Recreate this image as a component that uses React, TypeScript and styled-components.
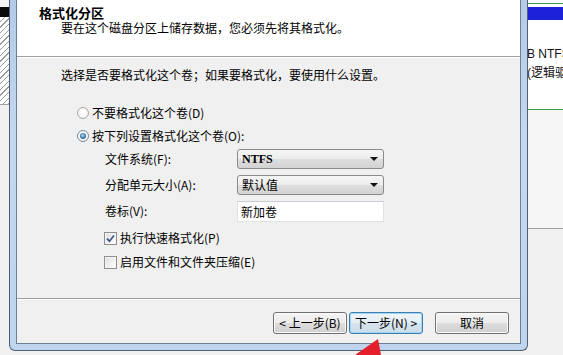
import React from "react";
import styled, { createGlobalStyle, css } from "styled-components";

const GlobalStyle = createGlobalStyle`
  html, body { margin: 0; padding: 0; background: #f0f0f0; }
  body {
    font-family: "Noto Sans CJK SC", "Liberation Sans", sans-serif;
    font-size: 12px;
    color: #000;
  }
  * { box-sizing: border-box; }
`;

const Screen = styled.div`
  position: relative;
  display: flex;
  align-items: flex-start;
  width: 563px;
  height: 355px;
  overflow: hidden;
  background: #f0f0f0;
`;

/* ---------- background window (disk management) ---------- */
const SidePane = styled.div<{ $grow?: boolean }>`
  flex: ${(p) => (p.$grow ? "1 1 auto" : "none")};
  width: ${(p) => (p.$grow ? "auto" : "9px")};
  min-width: 0;
  height: 100%;
  display: flex;
  flex-direction: column;
  overflow: hidden;
  background: #f0f0f0;
`;

const Strip = styled.div<{ $h: number; $bg: string }>`
  flex: none;
  height: ${(p) => p.$h}px;
  background: ${(p) => p.$bg};
`;

const Hatch = styled.div`
  flex: none;
  height: 87px;
  background: repeating-linear-gradient(
    135deg,
    #ffffff 0px,
    #ffffff 3px,
    #9a9a9a 3px,
    #9a9a9a 4px
  );
`;

const DiskInfo = styled.div`
  flex: none;
  height: 89px;
  background: #fff;
  padding-top: 25px;
  margin-left: -1px;
  font-family: "Liberation Sans", "Noto Sans CJK SC", sans-serif;
  font-size: 12px;
  line-height: 19px;
  white-space: nowrap;
  color: #111;
`;

/* ---------- dialog frame ---------- */
const Frame = styled.div`
  flex: none;
  width: 519px;
  height: 351px;
  border: 1px solid #4f6075;
  border-top: none;
  border-radius: 0 0 6px 6px;
  padding: 0 6px 6px;
  background: linear-gradient(to bottom, #b4cbe6, #c4d8ef 40%, #bfd5ee);
`;

const Client = styled.div`
  height: 100%;
  display: flex;
  flex-direction: column;
  border: 1px solid #6c7f95;
  border-top: none;
  background: #f0f0f0;
`;

const Header = styled.div`
  flex: none;
  height: 57px;
  background: #fff;
  border-bottom: 1px solid #a0a0a0;
  padding: 5px 0 0 22px;
`;

const Title = styled.div`
  font-weight: bold;
  font-size: 13px;
  line-height: 16px;
`;

const Subtitle = styled.div`
  padding-left: 22px;
  line-height: 14px;
`;

const Body = styled.div`
  flex: 1;
  padding: 10px 0 0 44px;
  box-shadow: inset 0 1px 0 #ffffff;
`;

const Intro = styled.div`
  line-height: 16px;
`;

const OptionList = styled.div<{ $top: number; $left: number; $gap: number }>`
  display: flex;
  flex-direction: column;
  gap: ${(p) => p.$gap}px;
  margin-top: ${(p) => p.$top}px;
  margin-left: ${(p) => p.$left}px;
`;

const OptionRow = styled.label`
  display: flex;
  align-items: center;
  gap: 3px;
  height: 18px;
  line-height: 18px;
  white-space: nowrap;
`;

const Radio = styled.span<{ $checked?: boolean }>`
  flex: none;
  width: 12px;
  height: 12px;
  border-radius: 50%;
  border: 1px solid #a9a9a9;
  background: radial-gradient(circle at 50% 45%, #ffffff 30%, #e2e2e2 100%);
  display: flex;
  align-items: center;
  justify-content: center;
  ${(p) =>
    p.$checked &&
    css`
      border-color: #7b8a9a;
      &::after {
        content: "";
        width: 6px;
        height: 6px;
        border-radius: 50%;
        background: radial-gradient(
          circle at 45% 40%,
          #a9dcf6 0%,
          #3f77a8 55%,
          #1f3f60 100%
        );
      }
    `}
`;

const CheckBox = styled.span`
  flex: none;
  width: 13px;
  height: 13px;
  border: 1px solid #8e8f8f;
  background: linear-gradient(135deg, #dcdcdc, #f6f6f6 70%, #ffffff);
  box-shadow: inset 0 0 0 1px #f4f4f4;
  display: flex;
  align-items: center;
  justify-content: center;
`;

const CheckRow = styled(OptionRow)`
  gap: 3px;
`;

const Settings = styled.div`
  display: grid;
  grid-template-columns: 132px 147px;
  grid-auto-rows: 20px;
  row-gap: 6px;
  align-items: center;
  margin: 4px 0 0 44px;
`;

const FieldLabel = styled.div`
  line-height: 20px;
  white-space: nowrap;
`;

const Combo = styled.div`
  height: 20px;
  display: flex;
  align-items: center;
  justify-content: space-between;
  padding: 0 5px 0 4px;
  border: 1px solid #8a8a8a;
  border-radius: 3px;
  background: linear-gradient(#f6f6f6, #ececec 50%, #dedede 51%, #d3d3d3);
  line-height: 18px;
`;

const ComboText = styled.span<{ $latin?: boolean }>`
  font-family: ${(p) =>
    p.$latin
      ? '"Liberation Serif", "Noto Sans CJK SC", serif'
      : '"Noto Sans CJK SC", sans-serif'};
  font-weight: ${(p) => (p.$latin ? "bold" : "normal")};
  font-size: 12px;
`;

const Caret = styled.span`
  width: 0;
  height: 0;
  border-left: 4px solid transparent;
  border-right: 4px solid transparent;
  border-top: 4px solid #111;
`;

const TextBox = styled.div`
  height: 21px;
  border: 1px solid #dfe3e8;
  border-top-color: #c9ced6;
  background: #fff;
  padding-left: 3px;
  line-height: 19px;
`;

const Footer = styled.div`
  flex: none;
  height: 45px;
  border-top: 1px solid #a0a0a0;
  box-shadow: inset 0 1px 0 #ffffff;
  display: flex;
  justify-content: flex-end;
  align-items: flex-start;
  padding: 13px 11px 0 0;
`;

const Button = styled.button<{ $default?: boolean; $gapLeft: number }>`
  width: 74px;
  height: 22px;
  margin-left: ${(p) => p.$gapLeft}px;
  padding: 0;
  font-family: "Noto Sans CJK SC", "Liberation Sans", sans-serif;
  font-size: 12px;
  line-height: 20px;
  color: #000;
  border: 1px solid #707070;
  border-radius: 3px;
  background: linear-gradient(#f4f4f4, #ececec 50%, #dddddd 51%, #d0d0d0);
  box-shadow: inset 0 0 0 1px #fbfbfb;
  white-space: nowrap;
  ${(p) =>
    p.$default &&
    css`
      border-color: #3c7fb1;
      box-shadow: inset 0 0 0 1px #9fd5f3;
      background: linear-gradient(#eef5fa, #e4eef5 50%, #d6e4ee 51%, #cddde9);
    `}
`;

const Arrow = styled.svg`
  position: absolute;
  left: 350px;
  top: 336px;
  width: 36px;
  height: 19px;
`;

export default function App() {
  return (
    <>
      <GlobalStyle />
      <Screen>
        <SidePane>
          <Strip $h={7} $bg="#f4f4f4" />
          <Strip $h={10} $bg="#0a0a0a" />
          <Hatch />
          <Strip $h={1} $bg="#a0a0a0" />
        </SidePane>

        <Frame>
          <Client>
            <Header>
              <Title>格式化分区</Title>
              <Subtitle>要在这个磁盘分区上储存数据，您必须先将其格式化。</Subtitle>
            </Header>

            <Body>
              <Intro>选择是否要格式化这个卷；如果要格式化，要使用什么设置。</Intro>

              <OptionList $top={21} $left={16} $gap={5}>
                <OptionRow>
                  <Radio />
                  不要格式化这个卷(D)
                </OptionRow>
                <OptionRow>
                  <Radio $checked />
                  按下列设置格式化这个卷(O):
                </OptionRow>
              </OptionList>

              <Settings>
                <FieldLabel>文件系统(F):</FieldLabel>
                <Combo>
                  <ComboText $latin>NTFS</ComboText>
                  <Caret />
                </Combo>
                <FieldLabel>分配单元大小(A):</FieldLabel>
                <Combo>
                  <ComboText>默认值</ComboText>
                  <Caret />
                </Combo>
                <FieldLabel>卷标(V):</FieldLabel>
                <TextBox>新加卷</TextBox>
              </Settings>

              <OptionList $top={8} $left={43} $gap={6}>
                <CheckRow>
                  <CheckBox>
                    <svg width="9" height="9" viewBox="0 0 9 9">
                      <path
                        d="M1 4.6 L3.5 7.2 L8 1.4"
                        fill="none"
                        stroke="#3f5687"
                        strokeWidth="1.7"
                      />
                    </svg>
                  </CheckBox>
                  执行快速格式化(P)
                </CheckRow>
                <CheckRow>
                  <CheckBox />
                  启用文件和文件夹压缩(E)
                </CheckRow>
              </OptionList>
            </Body>

            <Footer>
              <Button $gapLeft={0}>&lt; 上一步(B)</Button>
              <Button $gapLeft={2} $default>
                下一步(N) &gt;
              </Button>
              <Button $gapLeft={12}>取消</Button>
            </Footer>
          </Client>
        </Frame>

        <SidePane $grow>
          <Strip $h={3} $bg="#ffffff" />
          <Strip $h={1} $bg="#3c9a48" />
          <Strip $h={3} $bg="#ffffff" />
          <Strip $h={13} $bg="#1c22d8" />
          <DiskInfo>
            <div>B NTFS</div>
            <div>(逻辑驱动器)</div>
          </DiskInfo>
          <Strip $h={1} $bg="#3c9a48" />
          <Strip $h={118} $bg="#f6f6f6" />
          <Strip $h={1} $bg="#a0a0a0" />
        </SidePane>

        <Arrow viewBox="0 0 36 19">
          <polygon points="28,3 5,19 31,19" fill="#e4202c" />
        </Arrow>
      </Screen>
    </>
  );
}
